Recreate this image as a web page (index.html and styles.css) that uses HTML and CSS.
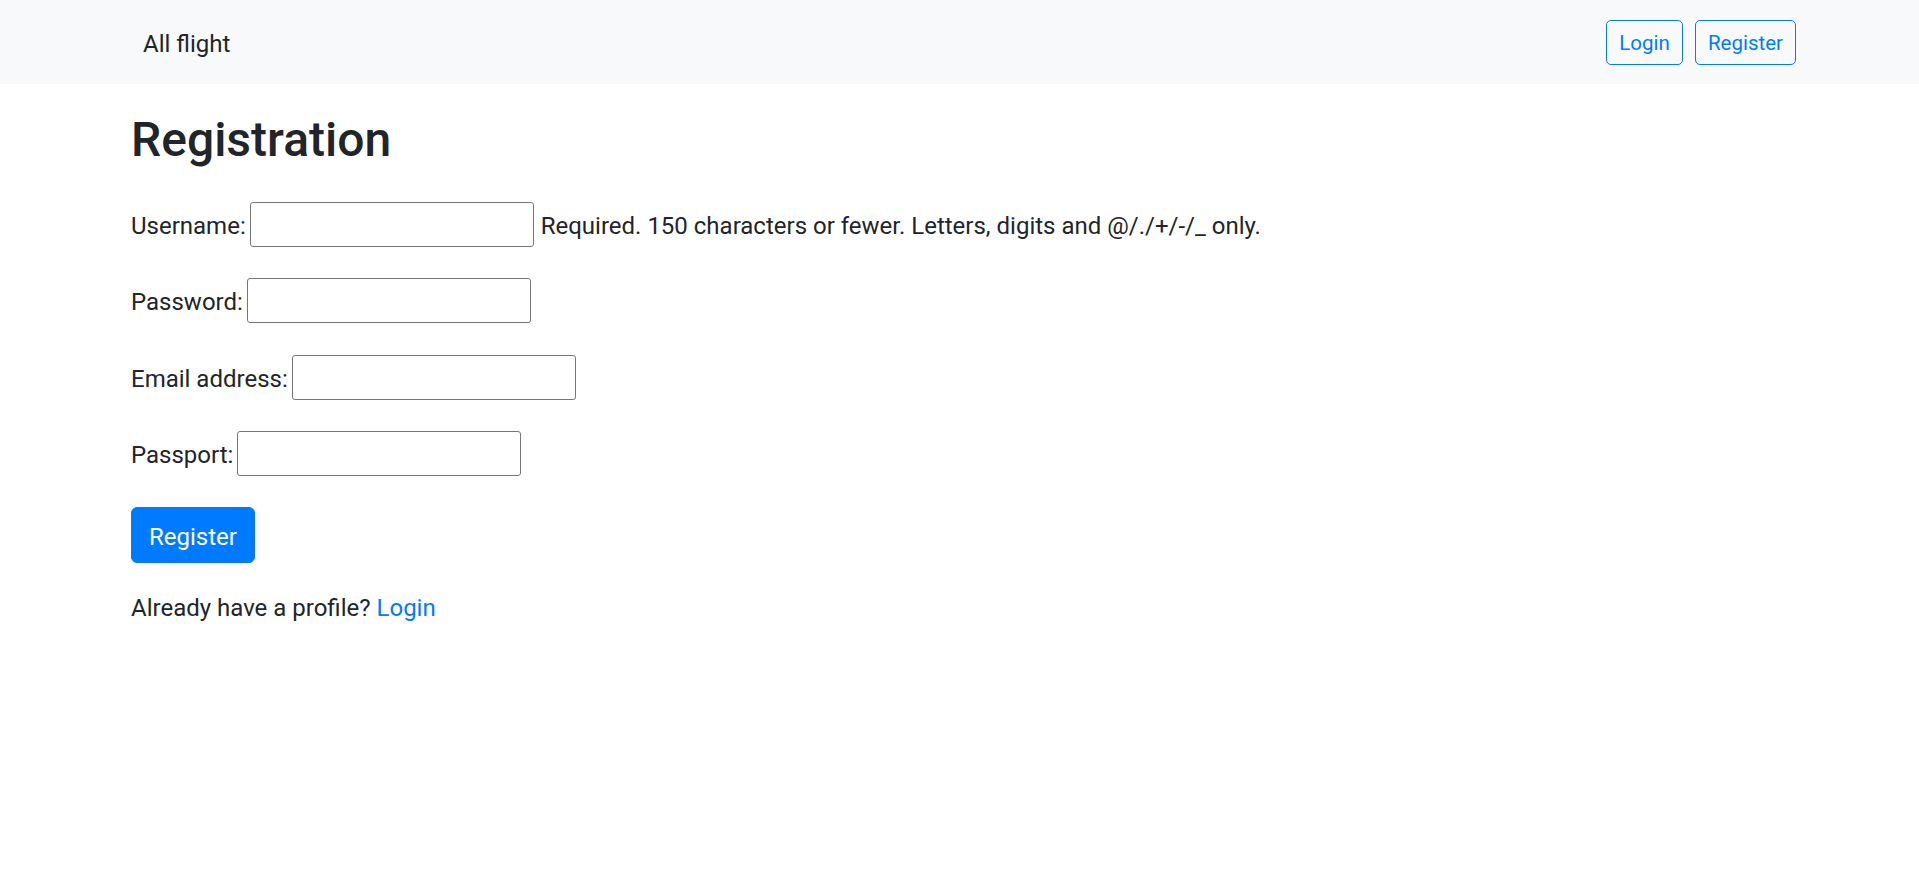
FILE: index.html
```html
<!DOCTYPE html>
<html lang="en">
<head>
<meta charset="utf-8">
<title>Registration</title>
<link rel="stylesheet" href="styles.css">
</head>
<body>
<nav class="navbar">
  <a class="brand" href="#">All flight</a>
  <div class="nav-actions">
    <a class="btn-outline" href="#">Login</a>
    <a class="btn-outline" href="#">Register</a>
  </div>
</nav>
<main class="content">
  <h1 class="title">Registration</h1>
  <form class="form">
    <div class="row">
      <label class="label" for="username">Username:</label>
      <input class="field" type="text" id="username">
      <span class="help">Required. 150 characters or fewer. Letters, digits and @/./+/-/_ only.</span>
    </div>
    <div class="row">
      <label class="label" for="password">Password:</label>
      <input class="field" type="password" id="password">
    </div>
    <div class="row">
      <label class="label" for="email">Email address:</label>
      <input class="field" type="email" id="email">
    </div>
    <div class="row">
      <label class="label" for="passport">Passport:</label>
      <input class="field" type="text" id="passport">
    </div>
    <button class="btn-primary" type="button">Register</button>
  </form>
  <p class="note">Already have a profile? <a class="link" href="#">Login</a></p>
</main>
</body>
</html>
```
FILE: styles.css
```css
html, body {
  margin: 0;
  padding: 0;
  background: #fff;
}

body {
  font-family: Roboto, "Liberation Sans", sans-serif;
  font-size: 24px;
  line-height: 1.5;
  color: #212529;
}

.navbar {
  height: 84px;
  box-sizing: border-box;
  background: #f8f9fa;
  display: flex;
  align-items: center;
  justify-content: space-between;
  padding: 0 123px 0 143px;
}

.brand {
  color: #212529;
  text-decoration: none;
  font-size: 24px;
  padding-top: 4px;
}

.nav-actions {
  display: flex;
  gap: 12px;
}

.btn-outline {
  display: flex;
  align-items: center;
  height: 45px;
  box-sizing: border-box;
  padding: 2px 12px 0;
  border: 1px solid #007bff;
  border-radius: 5px;
  color: #007bff;
  font-size: 20.5px;
  text-decoration: none;
}

.content {
  padding: 0 131px;
}

.title {
  margin: 27px 0 0;
  font-size: 48px;
  font-weight: 500;
  line-height: 58px;
}

.form {
  margin-top: 33px;
  display: flex;
  flex-direction: column;
  align-items: flex-start;
}

.row {
  display: flex;
  align-items: center;
  height: 45px;
  margin-bottom: 31.33px;
}

.label {
  padding-top: 3px;
  margin-right: 4px;
}

.help {
  padding-top: 3px;
  margin-left: 7px;
}

.field {
  width: 284px;
  height: 45px;
  box-sizing: border-box;
  border: 1px solid #767676;
  border-radius: 3px;
  background: #fff;
  font: inherit;
  padding: 0 4px;
}

.btn-primary {
  height: 56px;
  box-sizing: border-box;
  padding: 4px 17px 0;
  border: 1px solid #007bff;
  border-radius: 6px;
  background: #007bff;
  color: #fff;
  font: inherit;
  cursor: pointer;
}

.note {
  margin: 27px 0 0;
}

.link {
  color: #007bff;
  text-decoration: none;
}
```
